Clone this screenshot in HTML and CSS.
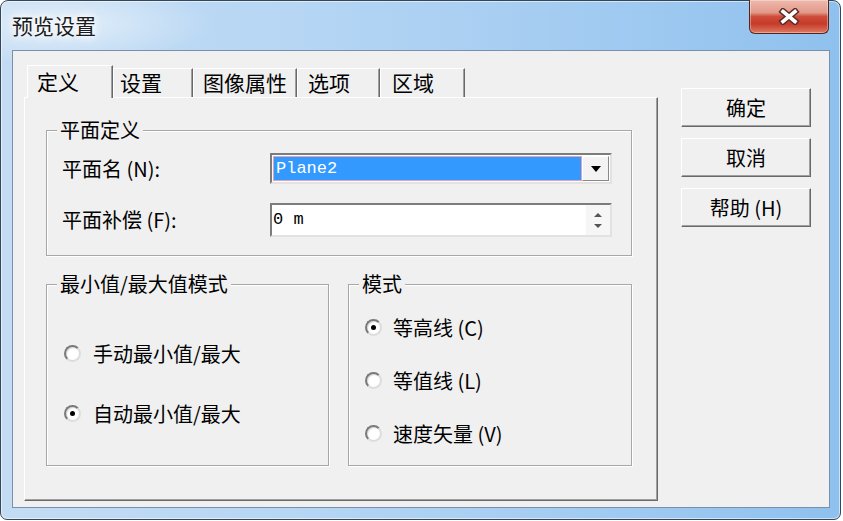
FILE: index.html
```html
<!DOCTYPE html>
<html lang="zh-CN">
<head>
<meta charset="utf-8">
<title>预览设置</title>
<link rel="stylesheet" href="styles.css">
</head>
<body>
<div class="window">
  <div class="titlebar">
    <span class="title">预览设置</span>
    <div class="close">
      <svg width="24" height="17" viewBox="0 0 24 17">
        <path d="M6 3.5 L18 13.5 M18 3.5 L6 13.5" stroke="#5b2a24" stroke-width="6.5" stroke-linecap="square" fill="none"/>
        <path d="M6 3.5 L18 13.5 M18 3.5 L6 13.5" stroke="#ffffff" stroke-width="3.6" stroke-linecap="square" fill="none"/>
      </svg>
    </div>
  </div>
  <div class="client">
    <div class="tabctl">
      <div class="tabs">
        <div class="tab t1 active">定义</div>
        <div class="tab t2">设置</div>
        <div class="tab t3">图像属性</div>
        <div class="tab t4">选项</div>
        <div class="tab t5">区域</div>
      </div>
      <div class="panel">
        <div class="group g-plane">
          <span class="legend">平面定义</span>
          <div class="row r1">
            <span class="lbl">平面名 (N):</span>
            <div class="combo">
              <div class="val">Plane2</div>
              <div class="dropbtn"><span class="tri-down"></span></div>
            </div>
          </div>
          <div class="row r2">
            <span class="lbl">平面补偿 (F):</span>
            <div class="spin">
              <div class="val">0 m</div>
              <div class="arrows"><span class="tri-up-s"></span><span class="tri-down-s"></span></div>
            </div>
          </div>
        </div>
        <div class="groups">
          <div class="group g-minmax">
            <span class="legend">最小值/最大值模式</span>
            <div class="opt"><span class="radio"></span><span>手动最小值/最大</span></div>
            <div class="opt"><span class="radio checked"></span><span>自动最小值/最大</span></div>
          </div>
          <div class="group g-mode">
            <span class="legend">模式</span>
            <div class="opt"><span class="radio checked"></span><span>等高线 (C)</span></div>
            <div class="opt"><span class="radio"></span><span>等值线 (L)</span></div>
            <div class="opt"><span class="radio"></span><span>速度矢量 (V)</span></div>
          </div>
        </div>
      </div>
    </div>
    <div class="buttons">
      <div class="btn">确定</div>
      <div class="btn">取消</div>
      <div class="btn">帮助 (H)</div>
    </div>
  </div>
</div>
</body>
</html>
```

FILE: styles.css
```css
* { box-sizing: border-box; }
html, body { margin: 0; padding: 0; background: #ffffff; }
body {
  width: 843px;
  height: 521px;
  overflow: hidden;
  font-family: "Noto Sans CJK SC", "Noto Sans", sans-serif;
  font-size: 20px;
  color: #000;
}

.window {
  width: 841px;
  height: 520px;
  border: 1px solid #34465a;
  border-radius: 8px 8px 7px 7px;
  padding: 0 10px 11px 11px;
  display: flex;
  flex-direction: column;
  background:
    radial-gradient(ellipse 220px 60px at 60px 22px, rgba(255,255,255,0.55), rgba(255,255,255,0) 70%),
    linear-gradient(to right, #c3dcf3 0%, #b6d6f4 35%, #a2cbf1 70%, #8fc1ee 100%);
  box-shadow: inset 0 0 0 1px rgba(255,255,255,0.55);
}

.titlebar {
  height: 49px;
  display: flex;
  align-items: flex-start;
}
.title {
  align-self: center;
  margin-top: -2px;
  font-size: 21px;
  line-height: 24px;
  color: #1b1b1b;
  text-shadow: 0 0 6px #fff, 0 0 10px #fff, 0 0 14px rgba(255,255,255,0.8);
}
.close {
  margin-left: auto;
  margin-right: 1px;
  margin-top: -1px;
  width: 80px;
  height: 34px;
  border: 1px solid #55241d;
  border-top: none;
  border-radius: 0 0 6px 6px;
  background: linear-gradient(#eeb9ac 0%, #e2998a 38%, #cf4d3a 50%, #c63b29 72%, #dd7a63 100%);
  box-shadow: inset 0 0 0 1px rgba(255,255,255,0.35);
  display: flex;
  align-items: center;
  justify-content: center;
}

.client {
  flex: 1;
  background: #f0f0f0;
  border: 1px solid #7890ad;
  display: flex;
  padding: 14px 0 0 11px;
  gap: 23px;
}

.tabctl {
  width: 634px;
  display: flex;
  flex-direction: column;
}
.tabs {
  display: flex;
  align-items: flex-end;
  height: 32px;
  margin-left: 3px;
}
.tab {
  height: 29px;
  border-top: 1px solid #fff;
  border-left: 1px solid #fff;
  border-right: 1px solid #696969;
  box-shadow: inset -1px 0 0 #a0a0a0;
  font-size: 21px;
  line-height: 26px;
  white-space: nowrap;
}
.tab.active {
  height: 33px;
  margin-bottom: -1px;
  padding-top: 2px;
  position: relative;
  z-index: 1;
  background: #f0f0f0;
}
.t1 { width: 86px; padding-left: 9px; }
.t2 { width: 80px; padding-left: 6px; }
.t3 { width: 104px; padding-left: 9px; }
.t4 { width: 83px; padding-left: 10px; }
.t5 { width: 85px; padding-left: 11px; }

.panel {
  height: 404px;
  border: 1px solid;
  border-color: #fff #696969 #696969 #fff;
  box-shadow: inset -1px -1px 0 #a0a0a0;
  padding: 32px 0 0 21px;
  display: flex;
  flex-direction: column;
}

.group {
  border: 1px solid #a7a7a7;
  box-shadow: 1px 1px 0 #fff, inset 1px 1px 0 #fff;
  display: flex;
  flex-direction: column;
  padding-left: 15px;
}
.legend {
  align-self: flex-start;
  margin: -11px 0 0 -5px;
  padding: 0 3px;
  background: #f0f0f0;
  line-height: 20px;
  white-space: nowrap;
}

.g-plane { width: 586px; height: 126px; }
.row { display: flex; align-items: center; }
.lbl { width: 208px; line-height: 22px; white-space: nowrap; }
.r1 { margin-top: 13px; height: 31px; }
.r2 { margin-top: 19px; height: 34px; }

.combo {
  width: 342px;
  height: 31px;
  border: 2px solid;
  border-color: #7c7c7c #e2e2e2 #e2e2e2 #7c7c7c;
  background: #fff;
  padding: 1px;
  display: flex;
}
.combo .val {
  flex: 1;
  background: #3399ff;
  border: 1px solid #e4a3b4;
  color: #fff;
  font-family: "Liberation Mono", monospace;
  font-size: 17px;
  line-height: 23px;
  padding-left: 2px;
}
.dropbtn {
  width: 27px;
  background: #f3f3f3;
  border: 1px solid;
  border-color: #fff #8a8a8a #8a8a8a #fff;
  display: flex;
  align-items: center;
  justify-content: center;
}
.tri-down {
  width: 0; height: 0;
  border-left: 5px solid transparent;
  border-right: 5px solid transparent;
  border-top: 6px solid #000;
}

.spin {
  width: 342px;
  height: 34px;
  border: 2px solid;
  border-color: #7c7c7c #e2e2e2 #e2e2e2 #7c7c7c;
  background: #fff;
  display: flex;
}
.spin .val {
  flex: 1;
  font-family: "Liberation Mono", monospace;
  font-size: 17px;
  line-height: 30px;
  padding-left: 1px;
}
.arrows {
  width: 24px;
  background: #f6f6f6;
  display: flex;
  flex-direction: column;
  align-items: center;
  justify-content: space-around;
  padding: 5px 0 4px;
}
.tri-up-s {
  width: 0; height: 0;
  border-left: 4px solid transparent;
  border-right: 4px solid transparent;
  border-bottom: 4px solid #555;
}
.tri-down-s {
  width: 0; height: 0;
  border-left: 4px solid transparent;
  border-right: 4px solid transparent;
  border-top: 4px solid #555;
}

.groups {
  display: flex;
  gap: 19px;
  margin-top: 28px;
}
.g-minmax { width: 283px; height: 182px; }
.g-mode { width: 284px; height: 182px; }

.opt {
  display: flex;
  align-items: center;
  height: 24px;
  gap: 12px;
  white-space: nowrap;
}
.g-minmax .opt { margin-left: 2px; margin-top: 36px; }
.g-minmax .legend + .opt { margin-top: 47px; }
.g-mode .opt { margin-left: 1px; margin-top: 29px; gap: 11px; }
.g-mode .legend + .opt { margin-top: 21px; }

.radio {
  width: 17px;
  height: 17px;
  flex: none;
  border-radius: 50%;
  background: #fff;
  border: 2px solid;
  border-color: #7a7a7a #dcdcdc #dcdcdc #7a7a7a;
  box-shadow: inset 1px 1px 1px rgba(0,0,0,0.15);
  display: flex;
  align-items: center;
  justify-content: center;
}
.radio.checked::after {
  content: "";
  width: 5px;
  height: 5px;
  border-radius: 50%;
  background: #000;
}

.buttons {
  display: flex;
  flex-direction: column;
  gap: 11px;
  margin-top: 23px;
}
.btn {
  width: 130px;
  height: 39px;
  border: 1px solid;
  border-color: #fff #696969 #696969 #fff;
  box-shadow: inset -1px -1px 0 #a0a0a0;
  background: #f0f0f0;
  display: flex;
  align-items: center;
  justify-content: center;
  line-height: 22px;
  white-space: nowrap;
}
```
